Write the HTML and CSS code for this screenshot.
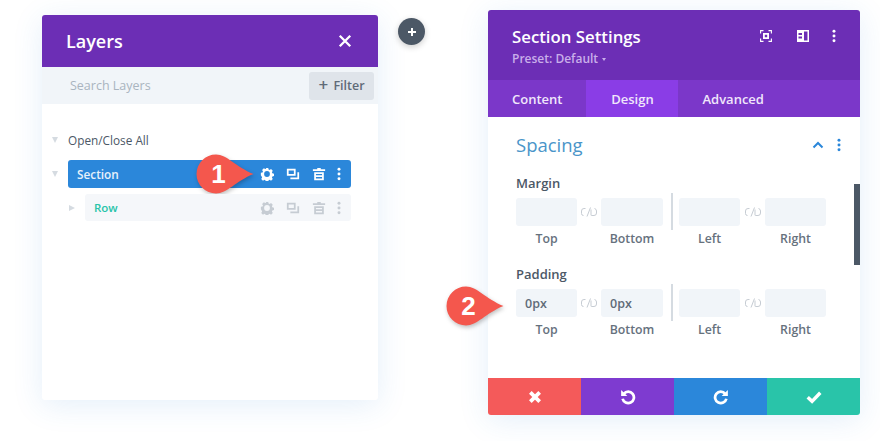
FILE: index.html
```html
<!DOCTYPE html>
<html lang="en">
<head>
  <meta charset="UTF-8">
  <title>Section Settings</title>
  <link rel="stylesheet" href="styles.css">
</head>
<body>
  <svg class="sprite" width="0" height="0">
    <symbol id="i-gear" viewBox="0 0 16 16">
      <path fill-rule="evenodd" d="M6.600 1h2.800l.4 1.900 1.200.5 1.600-1 2 2-1 1.600.5 1.200 1.900.4v2.800l-1.900.4-.5 1.200 1 1.600-2 2-1.600-1-1.200.5-.4 1.900H6.600l-.4-1.900-1.200-.5-1.600 1-2-2 1-1.600-.5-1.200L1 9.400V6.600l1.900-.4.5-1.200-1-1.600 2-2 1.600 1 1.200-.5zM8 4.700a3.300 3.300 0 1 0 0 6.600 3.300 3.300 0 0 0 0-6.600z"/>
    </symbol>
    <symbol id="i-clone" viewBox="0 0 16 16">
      <path fill-rule="evenodd" d="M1 2h10v8H1zm2 2v4h6V4z"/>
      <path d="M13 6h2v8H5v-2h8z"/>
    </symbol>
    <symbol id="i-trash" viewBox="0 0 16 16">
      <path fill-rule="evenodd" d="M6 1h4v1.500h5v2H1v-2h5zM2.500 6h11v9h-11zm2 2v1.500h7V8zm0 3.500V13h7v-1.500z"/>
    </symbol>
    <symbol id="i-dots" viewBox="0 0 4 16">
      <circle cx="2" cy="2.500" r="1.700"/>
      <circle cx="2" cy="8" r="1.700"/>
      <circle cx="2" cy="13.500" r="1.700"/>
    </symbol>
    <symbol id="i-link" viewBox="0 0 18 12">
      <path d="M5.500 2.500H4Q1.500 2.500 1.500 5v2.500Q1.500 9.500 3.500 9.500M7 10.500l3.500-9M11 3.500v5.500q0 .5.5.5h2.500q2.500 0 2.500-2.500V5q0-2-2-2.500" fill="none" stroke="currentColor" stroke-width="1"/>
    </symbol>
    <symbol id="i-drop" viewBox="0 0 58 40">
      <path d="M20 .5C31 .5 40 13 57.500 20 40 27 31 39.500 20 39.500A19.500 19.500 0 0 1 20 .5z"/>
    </symbol>
  </svg>

  <div class="stage">
    <!-- Layers panel -->
    <div class="panel layers">
      <div class="layers-head">
        <span class="layers-title">Layers</span>
        <svg class="close-icon" viewBox="0 0 12 12"><path d="M1.500 1.500l9 9m0-9l-9 9" stroke="#fff" stroke-width="2" fill="none"/></svg>
      </div>
      <div class="search-bar">
        <span class="search-text">Search Layers</span>
        <button class="filter-btn"><span class="filter-plus">+</span> Filter</button>
      </div>
      <div class="layers-body">
        <div class="tree-top">
          <span class="tri-down"></span>
          <span class="tree-label">Open/Close All</span>
        </div>
        <div class="tree-row">
          <span class="tri-down"></span>
          <div class="bar bar-section">
            <span>Section</span>
            <div class="bar-icons">
              <svg class="ic"><use href="#i-gear"/></svg>
              <svg class="ic"><use href="#i-clone"/></svg>
              <svg class="ic"><use href="#i-trash"/></svg>
              <svg class="ic-dots"><use href="#i-dots"/></svg>
            </div>
            <div class="callout callout-one">
              <svg class="callout-drop"><use href="#i-drop"/></svg>
              <span class="callout-num">1</span>
            </div>
          </div>
        </div>
        <div class="tree-row tree-child">
          <span class="tri-right"></span>
          <div class="bar bar-row">
            <span>Row</span>
            <div class="bar-icons">
              <svg class="ic"><use href="#i-gear"/></svg>
              <svg class="ic"><use href="#i-clone"/></svg>
              <svg class="ic"><use href="#i-trash"/></svg>
              <svg class="ic-dots"><use href="#i-dots"/></svg>
            </div>
          </div>
        </div>
      </div>
    </div>

    <div class="add-btn">
      <svg viewBox="0 0 10 10"><path d="M5 1v8M1 5h8" stroke="#fff" stroke-width="2" fill="none"/></svg>
    </div>

    <!-- Settings panel -->
    <div class="panel settings">
      <div class="settings-head">
        <div>
          <div class="settings-title">Section Settings</div>
          <div class="settings-preset">Preset: Default <span class="preset-caret"></span></div>
        </div>
        <div class="head-icons">
          <svg class="head-ic" viewBox="0 0 12 12">
            <path d="M.6 3.500V.6h2.900M8.500.6h2.900v2.900M11.400 8.500v2.900H8.500M3.500 11.400H.6V8.500" fill="none" stroke="#fff" stroke-width="1.100"/>
            <path fill-rule="evenodd" d="M3 3h6v6H3zm1.800 1.800v2.400h2.400V4.800z" fill="#fff"/>
          </svg>
          <svg class="head-ic" viewBox="0 0 12 12">
            <path fill-rule="evenodd" d="M0 0h12v12H0zm7 1.500V10.500h3.500V1.500zM1.500 3v2H5V3zm0 3.500v2H5v-2z" fill="#fff"/>
          </svg>
          <svg class="ic-dots head-dots"><use href="#i-dots"/></svg>
        </div>
      </div>
      <div class="tabs">
        <div class="tab">Content</div>
        <div class="tab tab-active">Design</div>
        <div class="tab">Advanced</div>
      </div>
      <div class="settings-body">
        <div class="scrollbar"></div>
        <div class="group-head">
          <span class="group-title">Spacing</span>
          <svg class="chevron" viewBox="0 0 12 8"><path d="M1.500 6.500L6 2l4.500 4.500" fill="none" stroke="#2b87da" stroke-width="2"/></svg>
          <svg class="ic-dots group-dots"><use href="#i-dots"/></svg>
        </div>

        <div class="field-label">Margin</div>
        <div class="field-grid">
          <div class="input"></div>
          <svg class="link-ic"><use href="#i-link"/></svg>
          <div class="input"></div>
          <div class="divider"></div>
          <div class="input"></div>
          <svg class="link-ic"><use href="#i-link"/></svg>
          <div class="input"></div>
          <div class="cap">Top</div><div></div><div class="cap">Bottom</div><div></div>
          <div class="cap">Left</div><div></div><div class="cap">Right</div>
        </div>

        <div class="field-label label-padding">Padding</div>
        <div class="field-grid">
          <div class="input">0px</div>
          <svg class="link-ic"><use href="#i-link"/></svg>
          <div class="input">0px</div>
          <div class="divider"></div>
          <div class="input"></div>
          <svg class="link-ic"><use href="#i-link"/></svg>
          <div class="input"></div>
          <div class="cap">Top</div><div></div><div class="cap">Bottom</div><div></div>
          <div class="cap">Left</div><div></div><div class="cap">Right</div>
          <div class="callout callout-two">
            <svg class="callout-drop"><use href="#i-drop"/></svg>
            <span class="callout-num">2</span>
          </div>
        </div>
      </div>
      <div class="actions">
        <div class="action act-red">
          <svg class="act-x" viewBox="0 0 12 12"><path d="M2 2l8 8m0-8l-8 8" stroke="#fff" stroke-width="3.200" fill="none"/></svg>
        </div>
        <div class="action act-purple">
          <svg viewBox="0 0 14 14"><path d="M3.300 4.200A5 5 0 1 1 2.300 8.500" stroke="#fff" stroke-width="2.400" fill="none"/><path d="M1 .8v5.400h5.400z" fill="#fff"/></svg>
        </div>
        <div class="action act-blue">
          <svg viewBox="0 0 14 14"><path d="M10.700 4.200A5 5 0 1 0 11.700 8.500" stroke="#fff" stroke-width="2.400" fill="none"/><path d="M13 .8v5.400H7.600z" fill="#fff"/></svg>
        </div>
        <div class="action act-green">
          <svg viewBox="0 0 14 12"><path d="M1.500 6.200l3.800 3.600 7.200-7.500" stroke="#fff" stroke-width="3" fill="none"/></svg>
        </div>
      </div>
    </div>
  </div>
</body>
</html>
```

FILE: styles.css
```css
/* General Styles */
body {
  margin: 0;
  background: #fff;
  font-family: "Open Sans", sans-serif;
  color: #4c5866;
}

.sprite {
  position: absolute;
}

.stage {
  position: relative;
  display: flex;
  align-items: flex-start;
  width: 880px;
  height: 441px;
  overflow: hidden;
}

.panel {
  display: flex;
  flex-direction: column;
  background: #fff;
  border-radius: 3px;
  box-shadow: 0 5px 30px rgba(43, 135, 218, 0.13);
}

/* Layers Panel */
.layers {
  width: 336px;
  height: 385px;
  margin: 15px 0 0 42px;
}

.layers-head {
  display: flex;
  align-items: center;
  justify-content: space-between;
  height: 52px;
  padding: 0 26px 0 24px;
  background: #6c2eb5;
  border-radius: 3px 3px 0 0;
}

.layers-title {
  font-size: 18px;
  font-weight: 600;
  color: #fff;
}

.close-icon {
  width: 14px;
  height: 14px;
}

.search-bar {
  display: flex;
  align-items: center;
  justify-content: space-between;
  height: 37px;
  padding: 0 4px 0 28px;
  background: #f1f5f9;
}

.search-text {
  font-size: 12.500px;
  font-weight: 500;
  color: #a9b4bf;
}

.filter-btn {
  width: 65px;
  height: 28px;
  padding: 0;
  border: none;
  border-radius: 3px;
  background: #dfe4ea;
  color: #5f6b78;
  font: 600 12.500px "Open Sans", sans-serif;
}

.filter-plus {
  font-size: 17px;
  line-height: 12px;
  vertical-align: -1px;
  margin-right: 2px;
}

.layers-body {
  padding-top: 27px;
}

.tree-top,
.tree-row {
  display: flex;
  align-items: center;
  padding-left: 10px;
}

.tree-top {
  height: 18px;
  margin-bottom: 11px;
}

.tree-row {
  margin-bottom: 6px;
}

.tree-child {
  padding-left: 27px;
}

.tri-down {
  flex: none;
  width: 0;
  height: 0;
  margin-right: 10px;
  border-style: solid;
  border-width: 6px 3.500px 0;
  border-color: #d5dbe1 transparent transparent;
}

.tri-right {
  flex: none;
  width: 0;
  height: 0;
  margin-right: 10px;
  border-style: solid;
  border-width: 3.500px 0 3.500px 6px;
  border-color: transparent transparent transparent #d5dbe1;
}

.tree-label {
  font-size: 11.800px;
  font-weight: 500;
  color: #4c5866;
}

.bar {
  position: relative;
  display: flex;
  align-items: center;
  justify-content: space-between;
  flex: 1;
  margin-right: 27px;
  padding: 0 10px 0 9px;
  border-radius: 3px;
  font-size: 11.800px;
  font-weight: 600;
}

.bar-section {
  height: 28px;
  background: #2b87da;
  color: #e6f1fb;
}

.bar-row {
  height: 27px;
  background: #f5f7fa;
  color: #29c4a9;
}

.bar-row span {
  font-size: 11.500px;
}

.bar-icons {
  display: flex;
  align-items: center;
  gap: 12px;
  color: #fff;
}

.bar-row .bar-icons {
  color: #c6ccd3;
}

.ic {
  width: 14px;
  height: 14px;
  fill: currentColor;
}

.ic-dots {
  width: 4px;
  height: 14px;
  fill: currentColor;
}

.bar-icons .ic-dots {
  margin-left: -1px;
}

/* Callouts */
.callout {
  position: absolute;
  display: flex;
  align-items: center;
  width: 58px;
  height: 40px;
  color: #fff;
}

.callout-drop {
  position: absolute;
  left: 0;
  top: 0;
  width: 58px;
  height: 40px;
  fill: #f4574d;
  filter: drop-shadow(1px 2px 2px rgba(0, 0, 0, 0.25));
}

.callout-num {
  position: relative;
  width: 45px;
  text-align: center;
  font: bold 26px "Liberation Sans", sans-serif;
}

.callout-one {
  left: 128px;
  top: -6px;
}

.callout-two {
  left: -70px;
  top: -3px;
}

/* Add Button */
.add-btn {
  position: absolute;
  left: 398px;
  top: 18px;
  display: flex;
  align-items: center;
  justify-content: center;
  width: 27px;
  height: 27px;
  border-radius: 50%;
  background: #4c5866;
  box-shadow: 0 2px 6px rgba(0, 0, 0, 0.2);
}

.add-btn svg {
  width: 10px;
  height: 10px;
}

/* Settings Panel */
.settings {
  width: 372px;
  height: 405px;
  margin: 10px 0 0 110px;
}

.settings-head {
  display: flex;
  justify-content: space-between;
  height: 70px;
  box-sizing: border-box;
  padding: 15px 24px 0;
  background: #6c2eb5;
  border-radius: 3px 3px 0 0;
}

.settings-title {
  font-size: 16.800px;
  font-weight: 600;
  line-height: 23px;
  color: #fff;
}

.settings-preset {
  margin-top: 3px;
  font-size: 12px;
  font-weight: 600;
  line-height: 16px;
  color: #c9aeea;
}

.preset-caret {
  display: inline-block;
  margin-left: 1px;
  vertical-align: 2px;
  border-style: solid;
  border-width: 3px 2.500px 0;
  border-color: #c9aeea transparent transparent;
}

.head-icons {
  display: flex;
  align-items: center;
  align-self: flex-start;
  gap: 25px;
  height: 22px;
}

.head-ic {
  width: 12px;
  height: 12px;
}

.head-dots {
  margin-left: -2px;
  color: #fff;
}

.tabs {
  display: flex;
  height: 37px;
  background: #7b37c9;
}

.tab {
  display: flex;
  align-items: center;
  padding: 0 24px;
  font-size: 13px;
  font-weight: 600;
  color: #f0e6fb;
}

.tab-active {
  justify-content: center;
  width: 92px;
  box-sizing: border-box;
  padding: 0;
  background: #8a3de6;
}

.settings-body {
  position: relative;
  flex: 1;
  padding: 0 34px 0 28px;
}

.scrollbar {
  position: absolute;
  right: 0;
  top: 67px;
  width: 6px;
  height: 81px;
  background: #4c5866;
}

.group-head {
  display: flex;
  align-items: center;
  height: 56px;
}

.group-title {
  flex: 1;
  margin-top: -2px;
  font-size: 18.500px;
  color: #4a95c9;
}

.chevron {
  width: 12px;
  height: 8px;
  margin-right: 13px;
}

.group-dots {
  margin-right: -15px;
  color: #2b87da;
}

.field-label {
  margin-top: 1px;
  font-size: 13px;
  font-weight: 600;
  line-height: 18px;
  color: #4c5866;
}

.label-padding {
  margin-top: 15px;
}

.field-grid {
  position: relative;
  display: grid;
  grid-template-columns: 61px 24px 62px 16px 61px 25px 61px;
  grid-template-rows: 28px 24px;
  margin-top: 6px;
}

.input {
  display: flex;
  align-items: center;
  padding-left: 9px;
  background: #f1f5f9;
  border-radius: 3px;
  font-size: 12.500px;
  font-weight: 600;
  color: #5f6b78;
}

.link-ic {
  align-self: center;
  justify-self: center;
  width: 18px;
  height: 12px;
  color: #c6ccd3;
}

.divider {
  justify-self: start;
  width: 2px;
  height: 37px;
  margin: -5px 0 0 8px;
  background: #d5dbe1;
}

.cap {
  align-self: end;
  padding-bottom: 2px;
  text-align: center;
  font-size: 12.300px;
  font-weight: 600;
  line-height: 18px;
  color: #66717d;
}

/* Footer Buttons */
.actions {
  display: flex;
  height: 37px;
}

.action {
  display: flex;
  align-items: center;
  justify-content: center;
  flex: 1;
}

.action svg {
  width: 16px;
  height: 16px;
}

.action .act-x {
  width: 14px;
  height: 14px;
}

.act-red {
  background: #f45a5a;
  border-radius: 0 0 0 3px;
}

.act-purple {
  background: #7e3bd0;
}

.act-blue {
  background: #2b87da;
}

.act-green {
  background: #29c4a9;
  border-radius: 0 0 3px 0;
}
```
